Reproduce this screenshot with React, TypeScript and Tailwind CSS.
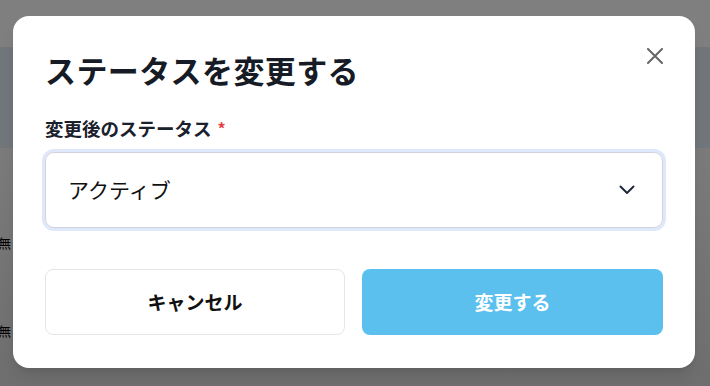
import React from "react";

export default function App() {
  const jp = { fontFamily: '"Noto Sans CJK JP", "Noto Sans", sans-serif' };
  return (
    <div className="relative w-[710px] h-[386px] overflow-hidden" style={jp}>
      {/* backdrop page (dimmed) */}
      <div className="flex flex-col h-full">
        <div className="h-[47px] bg-[#7f7f7f]" />
        <div className="h-[101px] bg-[#71767a]" />
        <div className="flex-1 bg-gradient-to-b from-[#7b7b7b] to-[#6e6e6e] flex flex-col pt-[86px] gap-[70px]">
          <span className="ml-[-2px] text-[13px] leading-[18px] text-black">無</span>
          <span className="ml-[-2px] text-[13px] leading-[18px] text-black">無</span>
        </div>
      </div>

      {/* modal */}
      <div className="absolute left-[13px] top-[16px] w-[682px] h-[352px] bg-white rounded-[16px] shadow-lg px-8 pt-[34px] flex flex-col">
        <button className="absolute right-[32px] top-[32px] w-4 h-4 flex items-center justify-center">
          <svg width="16" height="16" viewBox="0 0 16 16" fill="none" stroke="#666666" strokeWidth="2" strokeLinecap="round">
            <path d="M1 1 L15 15 M15 1 L1 15" />
          </svg>
        </button>
        <h2 className="text-[31px] leading-[40px] font-bold text-[#161b26] tracking-[0.4px]">ステータスを変更する</h2>
        <label className="mt-[26px] text-[18.5px] leading-[24px] font-semibold text-[#1a202c] flex items-center gap-[6px]">
          変更後のステータス<span className="text-[#e53e3e] text-[16px]">*</span>
        </label>
        <div className="mt-[12px] h-[76px] rounded-[9px] border border-[#d2d2dc] ring-[3px] ring-[#dfe8fa] flex items-center justify-between pl-[22px] pr-[27px]">
          <span className="text-[21px] text-[#111111]">アクティブ</span>
          <svg width="16" height="10" viewBox="0 0 16 10" fill="none" stroke="#1f2937" strokeWidth="2" strokeLinecap="round" strokeLinejoin="round">
            <path d="M1.5 1.5 L8 8 L14.5 1.5" />
          </svg>
        </div>
        <div className="mt-[41px] flex gap-[17px]">
          <button className="w-[300px] h-[66px] rounded-[8px] border border-[#e6e6e6] bg-white text-[19px] font-bold text-[#111111]">
            キャンセル
          </button>
          <button className="flex-1 h-[66px] rounded-[8px] bg-[#5bc0ee] text-[19px] font-bold text-white">
            変更する
          </button>
        </div>
      </div>
    </div>
  );
}
